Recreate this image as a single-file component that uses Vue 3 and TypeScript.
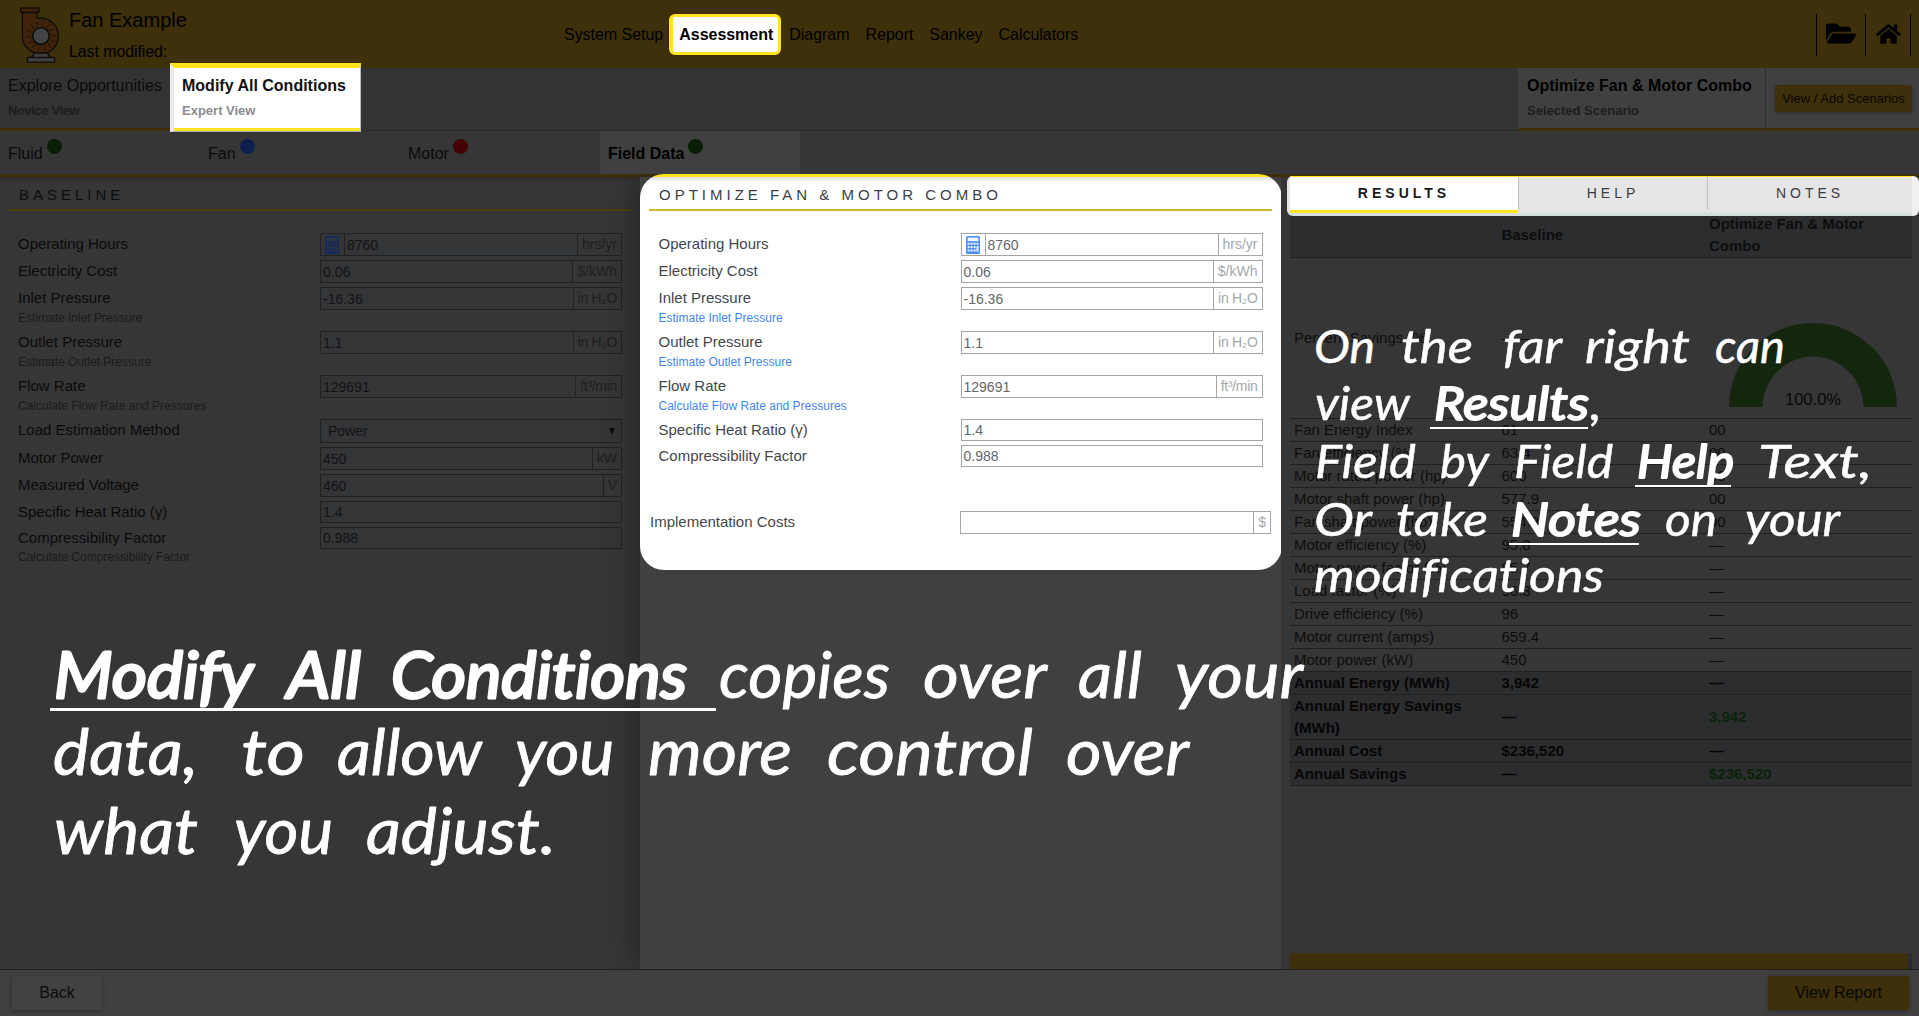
<script setup lang="ts">
interface Field {
  label: string
  value: string
  unit?: string
  link?: string
  kind?: 'timed' | 'select' | 'plain'
}

interface Word {
  text: string
  x: number
  end: number
  y: number
  strong?: boolean
}

const shared: Field[] = [
  { label: 'Operating Hours', value: '8760', unit: 'hrs/yr', kind: 'timed' },
  { label: 'Electricity Cost', value: '0.06', unit: '$/kWh' },
  { label: 'Inlet Pressure', value: '-16.36', unit: 'in H₂O', link: 'Estimate Inlet Pressure' },
  { label: 'Outlet Pressure', value: '1.1', unit: 'in H₂O', link: 'Estimate Outlet Pressure' },
  { label: 'Flow Rate', value: '129691', unit: 'ft³/min', link: 'Calculate Flow Rate and Pressures' },
]

const baseline: Field[] = [
  ...shared,
  { label: 'Load Estimation Method', value: 'Power', kind: 'select' },
  { label: 'Motor Power', value: '450', unit: 'kW' },
  { label: 'Measured Voltage', value: '460', unit: 'V' },
  { label: 'Specific Heat Ratio (γ)', value: '1.4', kind: 'plain' },
  { label: 'Compressibility Factor', value: '0.988', kind: 'plain', link: 'Calculate Compressibility Factor' },
]

const modified: Field[] = [
  ...shared,
  { label: 'Specific Heat Ratio (γ)', value: '1.4', kind: 'plain' },
  { label: 'Compressibility Factor', value: '0.988', kind: 'plain' },
]

const panels = [
  { key: 'base', title: 'BASELINE', fields: baseline },
  { key: 'mod', title: 'OPTIMIZE FAN & MOTOR COMBO', fields: modified },
]

const nav = ['System Setup', 'Assessment', 'Diagram', 'Report', 'Sankey', 'Calculators']

const steps = [
  { name: 'Fluid', dot: 'green' },
  { name: 'Fan', dot: 'blue' },
  { name: 'Motor', dot: 'red' },
  { name: 'Field Data', dot: 'green' },
]

const results: string[][] = [
  ['Fan Energy Index', '01', '00'],
  ['Fan efficiency (%)', '63.4', '00'],
  ['Motor rated power (hp)', '600', '00'],
  ['Motor shaft power (hp)', '577.9', '00'],
  ['Fan shaft power (hp)', '554.8', '00'],
  ['Motor efficiency (%)', '95.8', '—'],
  ['Motor power factor (%)', '85.7', '—'],
  ['Load factor (%)', '96.3', '—'],
  ['Drive efficiency (%)', '96', '—'],
  ['Motor current (amps)', '659.4', '—'],
  ['Motor power (kW)', '450', '—'],
]

const annual: string[][] = [
  ['Annual Energy (MWh)', '3,942', '—'],
  ['Annual Energy Savings (MWh)', '—', '3,942'],
  ['Annual Cost', '$236,520', '—'],
  ['Annual Savings', '—', '$236,520'],
]

const bigNote: Word[] = [
  { text: 'Modify', x: 54, end: 253, y: 698, strong: true },
  { text: 'All', x: 287, end: 361, y: 698, strong: true },
  { text: 'Conditions', x: 391, end: 687, y: 698, strong: true },
  { text: 'copies', x: 719, end: 890, y: 698 },
  { text: 'over', x: 923, end: 1047, y: 698 },
  { text: 'all', x: 1078, end: 1142, y: 698 },
  { text: 'your', x: 1175, end: 1303, y: 698 },
  { text: 'data,', x: 53, end: 198, y: 775 },
  { text: 'to', x: 241, end: 305, y: 775 },
  { text: 'allow', x: 337, end: 482, y: 775 },
  { text: 'you', x: 515, end: 614, y: 775 },
  { text: 'more', x: 648, end: 792, y: 775 },
  { text: 'control', x: 827, end: 1033, y: 775 },
  { text: 'over', x: 1066, end: 1189, y: 775 },
  { text: 'what', x: 54, end: 198, y: 854 },
  { text: 'you', x: 234, end: 333, y: 854 },
  { text: 'adjust.', x: 366, end: 556, y: 854 },
]

const sideNote: Word[] = [
  { text: 'On', x: 1314, end: 1375, y: 363 },
  { text: 'the', x: 1401, end: 1473, y: 363 },
  { text: 'far', x: 1503, end: 1562, y: 363 },
  { text: 'right', x: 1585, end: 1690, y: 363 },
  { text: 'can', x: 1715, end: 1785, y: 363 },
  { text: 'view', x: 1315, end: 1410, y: 420 },
  { text: 'Results', x: 1434, end: 1589, y: 420, strong: true },
  { text: ',', x: 1590, end: 1602, y: 420 },
  { text: 'Field', x: 1315, end: 1416, y: 478 },
  { text: 'by', x: 1440, end: 1489, y: 478 },
  { text: 'Field', x: 1514, end: 1613, y: 478 },
  { text: 'Help', x: 1637, end: 1734, y: 478, strong: true },
  { text: 'Text,', x: 1758, end: 1872, y: 478 },
  { text: 'Or', x: 1314, end: 1372, y: 536 },
  { text: 'take', x: 1396, end: 1488, y: 536 },
  { text: 'Notes', x: 1511, end: 1641, y: 536, strong: true },
  { text: 'on', x: 1665, end: 1717, y: 536 },
  { text: 'your', x: 1745, end: 1840, y: 536 },
  { text: 'modifications', x: 1314, end: 1604, y: 592 },
]

const blades = Array.from({ length: 14 }, (_, i) => i * (360 / 14))
</script>

<template>
  <div class="app">
    <header class="top">
      <svg class="logo" viewBox="0 0 40 56" width="40" height="56">
        <g stroke="#0b0c0a" stroke-width="1.3">
          <path d="M2.4 5.5 H17 V11.2 A18 18 0 1 1 2.4 29 Z" fill="#41230a" />
          <rect x="0.8" y="1" width="18" height="4.3" fill="#41230a" />
          <path d="M14 46 H28 C28 49 30 50 32.5 51 H9.5 C12 50 14 49 14 46 Z" fill="#3c3c3c" />
          <rect x="7.5" y="50.5" width="27" height="4.7" fill="#404040" />
          <g fill="none" stroke="#160f08" stroke-width="0.8">
            <path v-for="a in blades" :key="a" d="M21 18.5 C23.4 18 24 16 23.4 14" :transform="`rotate(${a} 21 29)`" />
          </g>
          <circle cx="21" cy="29" r="8.3" fill="#434343" stroke-width="1.6" />
        </g>
      </svg>
      <div class="title">
        <div class="name">Fan Example</div>
        <div class="modified">Last modified:</div>
      </div>
      <nav class="nav">
        <span v-for="n in nav" :key="n" :class="{ active: n === 'Assessment' }">{{ n }}</span>
      </nav>
      <div class="actions">
        <span class="act folder">
          <svg viewBox="0 0 576 512" width="30" height="27"><path d="M572.694 292.093L500.27 416.248A63.997 63.997 0 0 1 444.989 448H45.025c-18.523 0-30.064-20.093-20.731-36.093l72.424-124.155A64 64 0 0 1 152 256h399.964c18.523 0 30.064 20.093 20.73 36.093zM152 224h328v-48c0-26.51-21.49-48-48-48H272l-64-64H48C21.49 64 0 85.49 0 112v278.046l69.077-118.418C86.214 242.25 117.989 224 152 224z" /></svg>
        </span>
        <span class="act home">
          <svg viewBox="0 0 576 512" width="25" height="22"><path d="M280.37 148.26L96 300.11V464a16 16 0 0 0 16 16l112.06-.29a16 16 0 0 0 15.92-16V368a16 16 0 0 1 16-16h64a16 16 0 0 1 16 16v95.64a16 16 0 0 0 16 16.05L464 480a16 16 0 0 0 16-16V300L295.67 148.26a12.19 12.19 0 0 0-15.3 0zM571.6 251.47L488 182.56V44.05a12 12 0 0 0-12-12h-56a12 12 0 0 0-12 12v72.61L318.47 43a48 48 0 0 0-61 0L4.34 251.47a12 12 0 0 0-1.6 16.9l25.5 31A12 12 0 0 0 45.15 301l235.22-193.74a12.19 12.19 0 0 1 15.3 0L530.9 301a12 12 0 0 0 16.9-1.6l25.5-31a12 12 0 0 0-1.7-16.93z" /></svg>
        </span>
      </div>
    </header>

    <div class="views">
      <div class="view explore">
        <div class="v1">Explore Opportunities</div>
        <div class="v2">Novice View</div>
      </div>
      <div class="view modify">
        <div class="v1">Modify All Conditions</div>
        <div class="v2">Expert View</div>
      </div>
      <div class="view scenario">
        <div class="v1">Optimize Fan &amp; Motor Combo</div>
        <div class="v2">Selected Scenario</div>
      </div>
      <div class="add"><button type="button">View / Add Scenarios</button></div>
    </div>

    <div class="steps">
      <div v-for="s in steps" :key="s.name" class="step" :class="{ on: s.name === 'Field Data' }">
        <span>{{ s.name }}</span><i :class="s.dot"></i>
      </div>
    </div>

    <main class="main">
      <section v-for="p in panels" :key="p.key" class="panel" :class="p.key">
        <div class="card">
          <h2>{{ p.title }}</h2>
          <div class="fields">
            <div v-for="f in p.fields" :key="f.label" class="item">
              <div class="row" :class="f.kind">
                <label>{{ f.label }}</label>
                <div class="box">
                  <span v-if="f.kind === 'timed'" class="calc">
                    <svg viewBox="0 0 14 18" width="14" height="18">
                      <rect x="0" y="0" width="14" height="18" rx="1.6" class="ink" />
                      <rect x="1.6" y="1.6" width="10.8" height="3.6" class="hole" />
                      <g class="hole">
                        <rect x="1.6" y="6.8" width="2" height="2" /><rect x="4.6" y="6.8" width="2" height="2" /><rect x="7.6" y="6.8" width="2" height="2" /><rect x="10.5" y="6.8" width="2" height="2" />
                        <rect x="1.6" y="10.1" width="2" height="2" /><rect x="4.6" y="10.1" width="2" height="2" /><rect x="7.6" y="10.1" width="2" height="2" /><rect x="10.5" y="10.1" width="2" height="5.6" />
                        <rect x="1.6" y="13.5" width="2" height="2" /><rect x="4.6" y="13.5" width="2" height="2" /><rect x="7.6" y="13.5" width="2" height="2" />
                      </g>
                    </svg>
                  </span>
                  <span class="val">{{ f.value }}</span>
                  <span v-if="f.unit" class="unit" :class="{ tight: f.unit.length > 5 && f.kind !== 'timed' }">{{ f.unit }}</span>
                  <span v-if="f.kind === 'select'" class="caret"></span>
                </div>
              </div>
              <div v-if="f.link" class="link">{{ f.link }}</div>
            </div>
          </div>
          <div v-if="p.key === 'mod'" class="cost">
            <label>Implementation Costs</label>
            <div class="box"><span class="val"></span><span class="unit">$</span></div>
          </div>
        </div>
      </section>

      <aside class="side">
        <div class="tabs">
          <span class="t results">RESULTS</span>
          <span class="t help">HELP</span>
          <span class="t notes">NOTES</span>
        </div>
        <div class="table">
          <div class="tr head"><span></span><span>Baseline</span><span>Optimize Fan &amp; Motor Combo</span></div>
          <div class="tr percent">
            <span>Percent Savings (%)</span><span>— —</span>
            <svg width="170" height="86" viewBox="0 0 170 86">
              <path d="M1 85 A84 84 0 0 1 169 85 H135.4 A50.4 50.4 0 0 0 34.6 85 Z" fill="#15260f" />
              <text x="85" y="83" text-anchor="middle">100.0%</text>
            </svg>
          </div>
          <div v-for="r in results" :key="r[0]" class="tr"><span v-for="(c, i) in r" :key="i">{{ c }}</span></div>
          <div v-for="r in annual" :key="r[0]" class="tr total">
            <span v-for="(c, i) in r" :key="i" :class="{ gain: i === 2 && c !== '—' }">{{ c }}</span>
          </div>
        </div>
        <div class="strip"></div>
      </aside>
    </main>

    <footer class="foot">
      <button type="button" class="back">Back</button>
      <button type="button" class="report">View Report</button>
    </footer>

    <svg class="notes-layer" width="1919" height="1016" viewBox="0 0 1919 1016">
      <g class="big">
        <text v-for="(w, i) in bigNote" :key="i" :x="w.x" :y="w.y" :textLength="w.end - w.x" lengthAdjust="spacingAndGlyphs" :class="{ strong: w.strong }">{{ w.text }}</text>
        <rect x="50" y="708" width="666" height="3" />
      </g>
      <g class="small">
        <text v-for="(w, i) in sideNote" :key="i" :x="w.x" :y="w.y" :textLength="w.end - w.x" lengthAdjust="spacingAndGlyphs" :class="{ strong: w.strong }">{{ w.text }}</text>
        <rect x="1430" y="427" width="158" height="2" />
        <rect x="1635" y="485" width="96" height="2" />
        <rect x="1509" y="543" width="130" height="2" />
      </g>
    </svg>
  </div>
</template>

<style>
body {
  margin: 0;
  overflow: hidden;
  background: #404040;
}
</style>

<style scoped>
* {
  box-sizing: border-box;
}
.app {
  position: relative;
  width: 1919px;
  height: 1016px;
  display: flex;
  flex-direction: column;
  overflow: hidden;
  background: #363636;
  color: #0a0a0a;
  font: 16px 'Liberation Sans', Arial, sans-serif;
}
button {
  border: 0;
  padding: 0;
  font-family: inherit;
}

/* header */
.top {
  height: 68px;
  flex: none;
  display: flex;
  background: #3d300a;
  color: #000;
}
.logo {
  margin: 7px 0 0 20px;
}
.title {
  width: 496px;
  padding-left: 9px;
}
.name {
  font-size: 20px;
  line-height: 24px;
  margin-top: 8px;
}
.modified {
  line-height: 20px;
  margin-top: 10px;
  letter-spacing: -0.1px;
}
.nav {
  display: flex;
  align-items: center;
  height: 68px;
  letter-spacing: -0.03px;
}
.nav span {
  padding: 0 8px;
  line-height: 41px;
}
.nav .active {
  height: 41px;
  line-height: 35px;
  margin: 1px 0 0 -2px;
  padding: 0 5px 0 6px;
  border: 3px solid #ffe31f;
  border-left-width: 4px;
  border-radius: 6px;
  background: #fff;
  font-weight: bold;
}
.actions {
  display: flex;
  margin: 14px 8px 0 auto;
  height: 42px;
  border-right: 1px solid #000;
}
.act {
  display: flex;
  border-left: 1px solid #000;
}
.folder {
  width: 49px;
  padding: 6px 0 0 9px;
}
.home {
  width: 45px;
  padding: 9px 0 0 10px;
}

/* view switch */
.views {
  height: 63px;
  flex: none;
  display: flex;
  background: #333;
  border-bottom: 1px solid #2b2b2b;
}
.view {
  height: 63px;
  padding: 8px 0 0 8px;
}
.v1 {
  line-height: 20px;
}
.v2 {
  margin-top: 7px;
  line-height: 16px;
  font-size: 13px;
  font-weight: bold;
  color: #1d1d1d;
}
.explore {
  width: 170px;
  border-bottom: 3px solid #3d300a;
}
.explore .v2 {
  letter-spacing: -0.4px;
}
.modify {
  position: relative;
  width: 191px;
  height: 69px;
  margin-top: -5px;
  border-top: 5px solid #ffe31f;
  border-right: 1px solid #bbb;
  border-left: 4px solid #ebebeb;
  border-bottom: 1px solid #aab;
  background: linear-gradient(#fff 60px, #ffe31f 60px);
  font-weight: bold;
  color: #111;
}
.modify .v2 {
  color: #8c8c8c;
}
.scenario {
  width: 248px;
  margin-left: auto;
  padding-left: 9px;
  border-right: 1px solid #2a2c2e;
  border-bottom: 3px solid #3d300a;
  background: #404040;
  font-weight: bold;
  color: #000;
}
.add {
  width: 153px;
  height: 63px;
  padding: 17px 0 0 9px;
  border-bottom: 3px solid #3d300a;
  background: #404040;
}
.add button {
  display: block;
  width: 137px;
  height: 27px;
  border-radius: 2px;
  background: #3d300a;
  box-shadow: 0 1px 4px rgba(0, 0, 0, 0.3);
  font-size: 13px;
  color: #080600;
}

/* step tabs */
.steps {
  height: 46px;
  flex: none;
  display: flex;
  background: #363636;
  border-bottom: 3px solid #3d300a;
}
.step {
  width: 200px;
  display: flex;
  padding: 13px 0 0 8px;
  line-height: 20px;
}
.step.on {
  background: #404040;
  font-weight: bold;
  color: #000;
}
.step i {
  width: 15px;
  height: 15px;
  margin: -5px 0 0 4px;
  border-radius: 50%;
}
.green {
  background: #081f06;
}
.blue {
  background: #0d1f4c;
}
.red {
  background: #440204;
}

/* panels */
.main {
  flex: 1;
  min-height: 0;
  display: flex;
}
.panel {
  width: 640px;
  background: linear-gradient(#2d2d2d, #363636 5px);
}
.panel.mod {
  position: relative;
  width: 641px;
  background: #404040;
  box-shadow: -10px 0 28px -4px rgba(0, 0, 0, 0.3);
  clip-path: inset(-3px -1px 0 -60px);
}
.card {
  padding: 0 8px 0 9px;
}
.mod .card {
  height: 396px;
  width: 642px;
  margin-top: -3px;
  padding-right: 10px;
  border-radius: 24px;
  background: linear-gradient(#ffe31f 3px, #dcdcdc 3px, #fff 8px);
}
h2 {
  height: 34px;
  margin: 0;
  padding: 8px 0 0 10px;
  border-bottom: 2px solid #50400a;
  font-size: 15px;
  font-weight: normal;
  line-height: 20px;
  letter-spacing: 4px;
  color: #0c0d0e;
}
.mod h2 {
  height: 37px;
  padding-top: 11px;
  border-color: #d0b92a;
  color: #3c4045;
}
.fields {
  padding-top: 22px;
}
.row {
  display: flex;
  height: 23px;
  margin-bottom: 4px;
  padding-left: 9px;
}
.mod .fields {
  padding-left: 0.5px;
}
.row.plain {
  height: 22px;
}
.row.select {
  height: 24px;
}
label {
  width: 302px;
  flex: none;
  font-size: 15px;
  line-height: 22px;
}
.box {
  width: 302px;
  display: flex;
  border: 1px solid #202224;
  outline: 1px solid rgba(32, 34, 36, 0.35);
  outline-offset: -1px;
  background: #343537;
  font-size: 14px;
  line-height: 22px;
  color: #121315;
}
.val {
  flex: 1;
  padding-left: 2px;
}
.select .val {
  padding-left: 7px;
}
.plain .val {
  line-height: 21px;
}
.unit {
  padding: 0 4px;
  border-left: 1px solid #202224;
  line-height: 21px;
  background: #363636;
  color: #1e1f21;
}
.unit.tight {
  letter-spacing: -0.3px;
}
.calc {
  width: 24px;
  padding: 2px 0 0 4px;
  border-right: 1px solid #202224;
  line-height: 0;
}
.ink {
  fill: #13295c;
}
.hole {
  fill: #30343c;
}
.caret {
  width: 0;
  height: 0;
  margin: 8px 6px 0 0;
  border: 3px solid transparent;
  border-top: 7px solid #0c0c0c;
  border-bottom: 0;
}
.link {
  height: 17px;
  margin: -4px 0 4px;
  padding-left: 9px;
  font-size: 12px;
  line-height: 17px;
  color: #1a1b1d;
}
.mod label {
  color: #43474b;
}
.mod .box {
  border-color: #a3a5a6;
  outline: 0;
  background: #fff;
  color: #62676c;
}
.mod .unit {
  border-color: #a3a5a6;
  background: #fff;
  color: #a5a8aa;
}
.mod .calc {
  border-color: #a3a5a6;
}
.mod .ink {
  fill: #4a8df0;
}
.mod .hole {
  fill: #f3f7ff;
}
.mod .link {
  color: #3f86ee;
}
.cost {
  display: flex;
  height: 23px;
  margin-top: 44px;
  padding-left: 1px;
}
.cost label {
  width: 310px;
}
.cost .box {
  width: 311px;
}

/* results side */
.side {
  flex: 1;
  position: relative;
  display: flex;
  flex-direction: column;
  background: #363636;
}
.tabs {
  display: flex;
  width: 632px;
  height: 40px;
  margin: -1px 0 0 6px;
  padding: 0 7px 3px 3px;
  border-radius: 6px;
  background: linear-gradient(90deg, transparent 625px, #f1f1f1 625px), linear-gradient(#e5e5e5 37px, #d6dee0 37px);
  overflow: hidden;
  font-size: 14px;
  letter-spacing: 4px;
  text-align: center;
  line-height: 33px;
}
.t {
  height: 34px;
  border-top: 1px solid #ffe31f;
  background: #e5e5e5;
  color: #3a3c3e;
}
.results {
  width: 228px;
  height: 37px;
  border-bottom: 3px solid #ffe31f;
  background: #fff;
  font-weight: bold;
  color: #1b1b1b;
}
.help {
  width: 189px;
  border-left: 1px solid #bfc1c3;
}
.notes {
  flex: 1;
  border-left: 1px solid #bfc1c3;
}
.table {
  width: 622px;
  margin-left: 9px;
  font-size: 15px;
  line-height: 22px;
  color: #0d0d0e;
}
.tr {
  display: grid;
  grid-template-columns: 207.5px 207.5px 207px;
  align-items: center;
  min-height: 23px;
  border-bottom: 1px solid #1f2022;
}
.tr > span {
  padding-left: 4px;
}
.tr.head {
  height: 42px;
  padding-bottom: 4px;
  background: #2c2d2f;
  font-weight: bold;
}
.tr.head span {
  margin: -3px 0 0;
}
.tr.percent {
  height: 161px;
}
.percent svg {
  margin: 54px 0 0 23px;
}
.percent text {
  font-size: 16.5px;
  fill: #070907;
}
.tr.total {
  background: #2c2d2f;
  font-weight: bold;
  color: #060607;
}
.total .gain {
  color: #0a2308;
}
.strip {
  width: 618px;
  height: 16px;
  margin: auto 0 0 9px;
  background: #3d300a;
  box-shadow: 4px 0 0 #2a2b2c;
}

/* footer */
.foot {
  height: 47px;
  flex: none;
  display: flex;
  justify-content: space-between;
  padding: 6px 10px 0 12px;
  border-top: 1px solid #1f1f1f;
  background: #404040;
  position: relative;
}
.foot button {
  height: 34px;
  border-radius: 2px;
  box-shadow: 0 1px 4px rgba(0, 0, 0, 0.3);
  font-size: 16px;
  color: #080600;
}
.foot .back {
  width: 90px;
  background: #424242;
  color: #0c0c0c;
}
.report {
  width: 141px;
  background: #3d300a;
}

/* handwritten-style captions floating over the page */
.notes-layer {
  position: absolute;
  inset: 0;
  fill: #fff;
  font-family: 'Segoe Print', Lato, sans-serif;
  font-style: italic;
  font-variant-ligatures: none;
}
.notes-layer text {
  stroke: #fff;
  stroke-linejoin: round;
}
.big {
  font-size: 64px;
}
.big text {
  stroke-width: 0.8px;
}
.big .strong {
  stroke-width: 2.8px;
}
.small {
  font-size: 47px;
}
.small text {
  stroke-width: 0.5px;
}
.small .strong {
  stroke-width: 1.9px;
}
</style>
